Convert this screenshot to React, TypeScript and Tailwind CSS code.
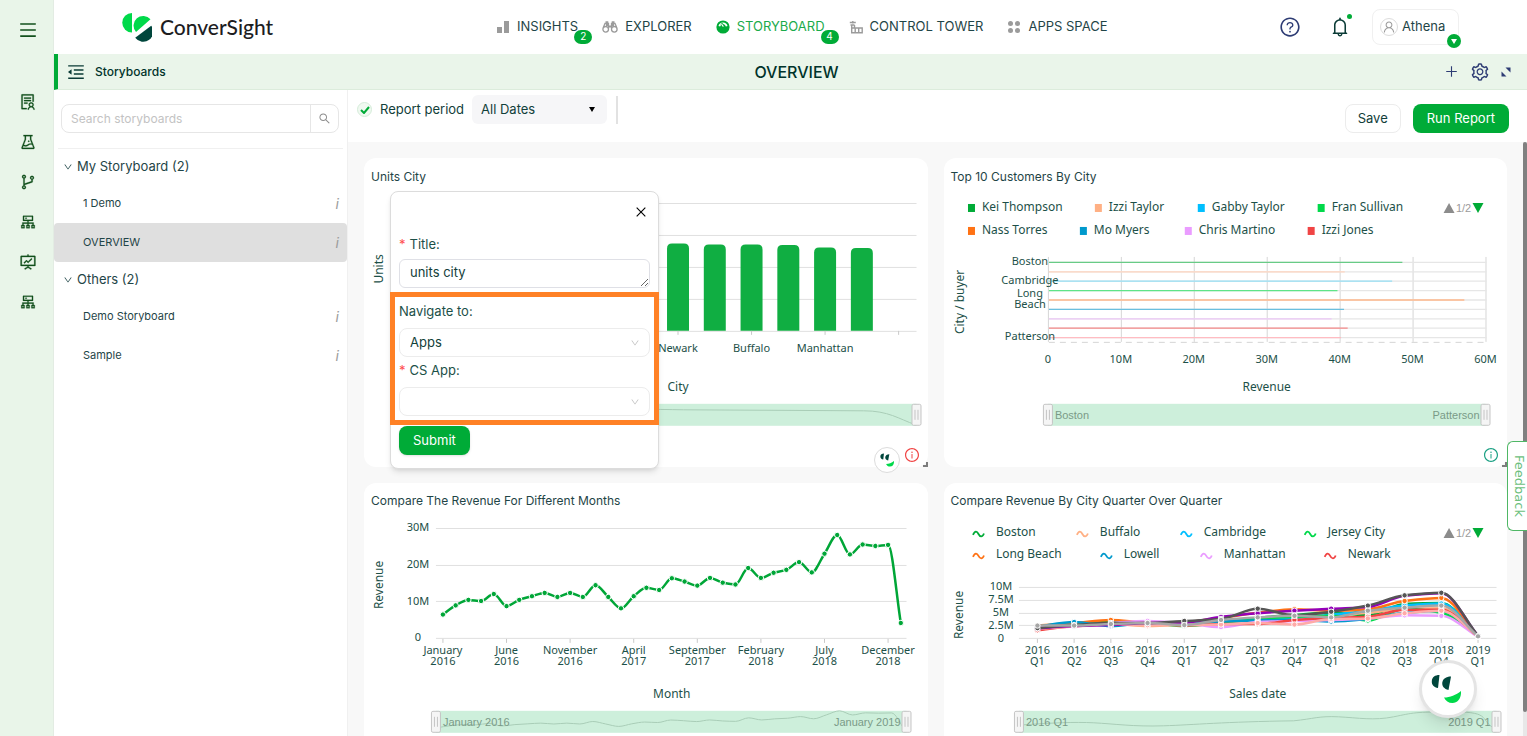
import { useState } from 'react';
import type { ReactNode } from 'react';
import {
  AiOutlineBell,
  AiOutlineBranches,
  AiOutlineClose,
  AiOutlineCluster,
  AiOutlineDown,
  AiOutlineExperiment,
  AiOutlineFundProjectionScreen,
  AiOutlineInfoCircle,
  AiOutlineMenu,
  AiOutlineMenuFold,
  AiOutlinePlus,
  AiOutlineQuestionCircle,
  AiOutlineSearch,
  AiOutlineSetting,
  AiOutlineSolution,
  AiOutlineUser,
} from 'react-icons/ai';

type Point = [number, number];

const chartFont = 'font-["Noto_Sans",sans-serif]';

// Monotone cubic through the points, so the curve never overshoots a peak
function smoothPath(pts: Point[]) {
  const n = pts.length;
  const slopes = pts.slice(1).map((p, i) => (p[1] - pts[i][1]) / (p[0] - pts[i][0]));
  const tangents = pts.map((_, i) => {
    if (i === 0) return slopes[0];
    if (i === n - 1) return slopes[n - 2];
    const a = slopes[i - 1];
    const b = slopes[i];
    return a * b <= 0 ? 0 : (2 * a * b) / (a + b);
  });
  let d = `M${pts[0][0]},${pts[0][1]}`;
  for (let i = 1; i < n; i++) {
    const [x0, y0] = pts[i - 1];
    const [x1, y1] = pts[i];
    const h = (x1 - x0) / 3;
    d += `C${x0 + h},${y0 + tangents[i - 1] * h} ${x1 - h},${y1 - tangents[i] * h} ${x1},${y1}`;
  }
  return d;
}

/* ---------- header ---------- */

function Logo() {
  return (
    <a href="#" className="flex items-center gap-2 text-[#1d1d1f]">
      <svg viewBox="0 0 30 29" className="h-[29px] w-[30px]">
        <path d="M10 0v19.500A9.750 9.750 0 0 1 10 0z" fill="#00d94a" />
        <path d="M14 19A9.400 9.400 0 0 1 28.500 6.200z" fill="#00d94a" />
        <path d="M13.200 24.800L29.200 12.800A10 10 0 0 1 13.200 24.800z" fill="#00463c" />
      </svg>
      <span className='font-["Lato",sans-serif] text-[21px] leading-7 font-medium'>ConverSight</span>
    </a>
  );
}

function BarsIcon() {
  return (
    <svg viewBox="0 0 14 14" className="h-[14px] w-[14px]" fill="#9b9b9b">
      <rect x="1" y="7" width="5" height="6" />
      <rect x="8" y="1" width="5" height="12" />
    </svg>
  );
}

function BinocularsIcon() {
  return (
    <svg viewBox="0 0 16 12" className="h-3 w-4" fill="none" stroke="#9b9b9b" strokeWidth="1.3">
      <circle cx="3.700" cy="8.300" r="2.800" />
      <circle cx="12.300" cy="8.300" r="2.800" />
      <path d="M1.500 6L3 2.500h3.500v5M14.500 6L13 2.500H9.500v5" />
      <path d="M3.500 1.200h2.800M9.700 1.200h2.800M6.500 5.500h3M4 4h2M10 4h2" strokeWidth="1.800" />
    </svg>
  );
}

function GaugeIcon() {
  return (
    <svg viewBox="0 0 14 14" className="h-[14px] w-[14px]">
      <circle cx="7" cy="7" r="6.600" fill="#00ab37" />
      <path d="M3.300 6.300a3.800 3.800 0 0 1 7.400 0" fill="none" stroke="#fff" strokeWidth="1.700" />
      <path d="M5.300 3.500L8 6.500" stroke="#00ab37" strokeWidth="2.200" />
      <path d="M5.500 4.200L7.400 6.600" stroke="#fff" strokeWidth="1.100" />
    </svg>
  );
}

function TowerIcon() {
  return (
    <svg viewBox="0 0 14 14" className="h-[14px] w-[14px]" fill="none" stroke="#9b9b9b" strokeWidth="1.400">
      <path d="M.8 2.500h6M3.800 1v2.500M1.500 5h4M2.700 5v7.700h10.500V8H5.500V5M2.700 8h3M6.200 8v4.500M9.700 8v4.500" />
    </svg>
  );
}

function AppsIcon() {
  return (
    <svg viewBox="0 0 14 14" className="h-[14px] w-[14px]" fill="#9b9b9b">
      <circle cx="3.500" cy="3.500" r="2.500" />
      <circle cx="10.500" cy="3.500" r="2.500" />
      <circle cx="3.500" cy="10.500" r="2.500" />
      <circle cx="10.500" cy="10.500" r="2.500" />
    </svg>
  );
}

const navItems = [
  { label: 'INSIGHTS', icon: <BarsIcon />, badge: 2 },
  { label: 'EXPLORER', icon: <BinocularsIcon /> },
  { label: 'STORYBOARD', icon: <GaugeIcon />, badge: 4, active: true },
  { label: 'CONTROL TOWER', icon: <TowerIcon /> },
  { label: 'APPS SPACE', icon: <AppsIcon /> },
];

function Header() {
  return (
    <header className="flex h-[54px] shrink-0 items-center bg-white pr-[68px] pl-[68px]">
      <div className="w-[374px] shrink-0">
        <Logo />
      </div>
      <nav className="flex items-center gap-6 pb-px">
        {navItems.map((item) => (
          <a
            key={item.label}
            href="#"
            className={`relative flex items-center gap-[7px] text-[13px] whitespace-nowrap ${item.active ? 'text-[#1aab4b]' : 'text-[#1f4547]'}`}
          >
            {item.icon}
            {item.label}
            {item.badge && (
              <span className="absolute top-[13px] -right-[14px] flex h-[14px] w-[18px] items-center justify-center rounded-full bg-[#00ab37] text-[10px] text-white">
                {item.badge}
              </span>
            )}
          </a>
        ))}
      </nav>
      <div className="ml-auto flex items-center">
        <button aria-label="Help" className="mr-7">
          <AiOutlineQuestionCircle className="h-[22px] w-[22px] text-[#2e3c74]" />
        </button>
        <button aria-label="Notifications" className="relative mr-[21px]">
          <AiOutlineBell className="h-[22px] w-[22px] text-[#0b3b36]" />
          <span className="absolute -top-[2px] -right-px h-[5px] w-[5px] rounded-full bg-[#00ab37]" />
        </button>
        <button className="relative flex h-9 w-[87px] items-center gap-1 rounded-lg border border-[#f0f0f0] px-[7px] text-[13px] text-[#1f4547]">
          <span className="flex h-[18px] w-[18px] shrink-0 items-center justify-center rounded-full border border-[#dcdcdc]">
            <AiOutlineUser className="h-[14px] w-[14px] text-[#9b9b9b]" />
          </span>
          Athena
          <span className="absolute -right-[3px] -bottom-1 flex h-[14px] w-[14px] items-center justify-center rounded-full bg-[#00ab37]">
            <svg viewBox="0 0 6 5" className="h-[5px] w-[6px]" fill="#fff">
              <path d="M0 0h6L3 5z" />
            </svg>
          </span>
        </button>
      </div>
    </header>
  );
}

function TitleBar() {
  return (
    <div className="grid h-9 shrink-0 grid-cols-[1fr_auto_1fr] items-center border-b border-l-4 border-b-[#dcecdc] border-l-[#00ab37] bg-[#eaf5ea] pr-4 pl-2">
      <div className="flex items-center gap-[9px]">
        <button aria-label="Collapse storyboards">
          <AiOutlineMenuFold className="h-5 w-5 text-[#0b3b36]" />
        </button>
        <h2 className="text-xs font-medium text-[#00332b]">Storyboards</h2>
      </div>
      <h1 className="pl-4 text-base font-medium text-[#00332b]">OVERVIEW</h1>
      <div className="flex items-center justify-end gap-[11px] text-[#2e3c74]">
        <button aria-label="Add">
          <AiOutlinePlus className="h-[15px] w-[15px]" />
        </button>
        <button aria-label="Settings">
          <AiOutlineSetting className="h-5 w-5" />
        </button>
        <button aria-label="Expand">
          <svg viewBox="0 0 10 10" className="h-[10px] w-[10px]" fill="#2e3c74">
            <path d="M4.500.5h5v5zM.5 4.500v5h5z" />
          </svg>
        </button>
      </div>
    </div>
  );
}

/* ---------- side ---------- */

const railIcons = [
  { label: 'Reports', Icon: AiOutlineSolution },
  { label: 'Experiments', Icon: AiOutlineExperiment },
  { label: 'Branches', Icon: AiOutlineBranches },
  { label: 'Clusters', Icon: AiOutlineCluster },
  { label: 'Projections', Icon: AiOutlineFundProjectionScreen },
  { label: 'Datasets', Icon: AiOutlineCluster },
];

function Rail() {
  return (
    <aside className="flex w-[54px] shrink-0 flex-col items-center border-r border-[#e3ece3] bg-[#e9f5e9] pt-5 pl-[2px] text-[#12501c]">
      <button aria-label="Menu">
        <AiOutlineMenu className="h-5 w-5" />
      </button>
      <nav className="mt-[53px] flex flex-col gap-[22px]">
        {railIcons.map(({ label, Icon }) => (
          <a key={label} href="#" aria-label={label}>
            <Icon className="h-[18px] w-[18px] stroke-[#12501c] stroke-[14]" />
          </a>
        ))}
      </nav>
    </aside>
  );
}

const groups = [
  { name: 'My Storyboard (2)', items: ['1 Demo', 'OVERVIEW'] },
  { name: 'Others (2)', items: ['Demo Storyboard', 'Sample'] },
];

function Sidebar() {
  const [selected, setSelected] = useState('OVERVIEW');
  return (
    <section className="w-[294px] shrink-0 border-r border-[#f0f0f0] bg-white">
      <div className="mx-1 border-b border-[#f0f0f0] pt-[14px] pr-1 pb-[15px] pl-[3px]">
        <form className="flex h-[29px] overflow-hidden rounded-lg border border-[#e6e6e6]">
          <input
            type="text"
            aria-label="Search storyboards"
            placeholder="Search storyboards"
            className="min-w-0 flex-1 px-[9px] text-xs outline-none placeholder:text-[#c3c3c3]"
          />
          <button type="button" aria-label="Search" className="flex w-7 items-center justify-center border-l border-[#e6e6e6]">
            <AiOutlineSearch className="h-[13px] w-[13px] text-[#8c8c8c]" />
          </button>
        </form>
      </div>
      {groups.map((group) => (
        <div key={group.name}>
          <button className="flex h-[35px] w-full items-center gap-1 pl-[9px] text-[13px] text-[#1f4547]">
            <AiOutlineDown className="h-[10px] w-[10px]" />
            {group.name}
          </button>
          {group.items.map((item) => (
            <button
              key={item}
              onClick={() => setSelected(item)}
              className={`flex h-[39px] w-full items-center justify-between rounded-sm pr-2 pl-[29px] text-[11px] text-[#1f4547] ${selected === item ? 'bg-[#dfdfdf]' : ''}`}
            >
              {item}
              <span className="text-sm text-[#9b9b9b] italic">i</span>
            </button>
          ))}
        </div>
      ))}
    </section>
  );
}

function Toolbar() {
  return (
    <div className="flex h-[52px] shrink-0 items-start justify-between bg-white pt-[5px] pr-[18px] pl-[9px]">
      <div className="flex items-center">
        <span className="flex h-[15px] w-[15px] items-center justify-center rounded-full border border-[#d5ecd9] bg-[#f0f9f1]">
          <svg viewBox="0 0 10 8" className="h-2 w-[10px]" fill="none" stroke="#00ab37" strokeWidth="2">
            <path d="M1 4l3 3 5-6" />
          </svg>
        </span>
        <label htmlFor="period" className="ml-2 text-[13px] text-[#12403a]">
          Report period
        </label>
        <div className="relative ml-2">
          <select
            id="period"
            className="h-[29px] w-[135px] appearance-none rounded-md bg-[#f6f6f8] pl-[9px] text-[13px] text-[#12403a]"
          >
            <option>All Dates</option>
          </select>
          <svg viewBox="0 0 6 5" className="pointer-events-none absolute top-3 right-3 h-[5px] w-[6px]">
            <path d="M0 0h6L3 5z" />
          </svg>
        </div>
        <span className="ml-[9px] h-7 w-[2px] bg-[#e2e2e2]" />
      </div>
      <div className="mt-[9px] flex gap-3 text-[13px]">
        <button className="h-[29px] rounded-lg border border-[#ececec] px-3 text-[#12403a]">Save</button>
        <button className="h-[29px] rounded-lg bg-[#00ab37] px-[14px] text-white">Run Report</button>
      </div>
    </div>
  );
}

/* ---------- charts ---------- */

function Label({ x, y, children, size = 11, anchor = 'middle' }: {
  x: number; y: number; children: ReactNode; size?: number; anchor?: 'start' | 'middle' | 'end';
}) {
  return (
    <text x={x} y={y - 1} fontSize={size} textAnchor={anchor} dominantBaseline="central" fill="#1c5048">
      {children}
    </text>
  );
}

function AxisName({ x, y, children }: { x: number; y: number; children: ReactNode }) {
  return (
    <text transform={`translate(${x - 1} ${y}) rotate(-90)`} fontSize={12} textAnchor="middle" dominantBaseline="central" fill="#1c5048">
      {children}
    </text>
  );
}

function ZoomBar({ x1, x2, y, shadow, from, to }: {
  x1: number; x2: number; y: number; shadow?: string; from?: string; to?: string;
}) {
  return (
    <g>
      <rect x={x1} y={y} width={x2 - x1} height={22} fill="#cdefdb" />
      {shadow && <path d={shadow} fill="none" stroke="#a9cdb7" />}
      {[x1, x2].map((x) => (
        <g key={x} stroke="#c4c4c4">
          <rect x={x - 4.5} y={y + 0.5} width={9} height={21} rx={1.5} fill="#f5f5f5" />
          <path d={`M${x - 1.5} ${y + 6}v10M${x + 1.5} ${y + 6}v10`} />
        </g>
      ))}
      <g fontSize={11} fill="#7a9a87" className='font-["Liberation_Sans",Arial,sans-serif]' dominantBaseline="central">
        <text x={x1 + 7} y={y + 11}>{from}</text>
        <text x={x2 - 6} y={y + 11} textAnchor="end">{to}</text>
      </g>
    </g>
  );
}

function Pager({ y }: { y: number }) {
  return (
    <g>
      <path d={`M500 ${y + 5}h11l-5.500-10z`} fill="#8c8c8c" />
      <text x={520} y={y} fontSize={11} textAnchor="middle" dominantBaseline="central" fill="#9b9b9b" className='font-["Liberation_Sans",Arial,sans-serif]'>
        1/2
      </text>
      <path d={`M529 ${y - 5}h11l-5.500 10z`} fill="#00ab37" />
    </g>
  );
}

function ChartSvg({ label, children }: { label: string; children: ReactNode }) {
  return (
    <svg viewBox="0 0 564 277" role="img" aria-label={label} className={`block h-auto w-full ${chartFont}`}>
      {children}
    </svg>
  );
}

const unitBars = [97, 94, 92, 91, 89, 88, 87.5, 86.5, 86.5, 86, 83.5, 83, 0];

function UnitsChart() {
  const cx = (i: number) => 93.5 + i * 36.8;
  return (
    <ChartSvg label="Units by city">
      {[13, 45, 77, 109, 141].map((y) => (
        <path key={y} d={`M75 ${y + 0.5}H553`} stroke="#e0e0e0" />
      ))}
      {unitBars.map((h, i) =>
        h > 0 ? (
          <path
            key={i}
            d={`M${cx(i) - 11} 141v${-h + 5}q0 -5 5 -5h12q5 0 5 5v${h - 5}z`}
            fill="#10ae42"
          />
        ) : null,
      )}
      {[0, 2, 4, 6, 8, 10, 12].map((i) => (
        <path key={i} d={`M${cx(i)} 141v4`} stroke="#c9c9c9" />
      ))}
      <Label x={cx(6)} y={159}>Newark</Label>
      <Label x={cx(8)} y={159}>Buffalo</Label>
      <Label x={cx(10)} y={159}>Manhattan</Label>
      <Label x={cx(6)} y={198} size={12}>City</Label>
      <AxisName x={16} y={79}>Units</AxisName>
      <ZoomBar x1={75} x2={553} y={214} shadow="M75 216C180 218 260 219 320 220L500 221C525 221 535 229 552 235" />
    </ChartSvg>
  );
}

const customerLegend = [
  { name: 'Kei Thompson', x: 24, y: 18, color: '#00ab37' },
  { name: 'Izzi Taylor', x: 151, y: 18, color: '#ffb084' },
  { name: 'Gabby Taylor', x: 254, y: 18, color: '#00bfff' },
  { name: 'Fran Sullivan', x: 374, y: 18, color: '#00d94a' },
  { name: 'Nass Torres', x: 24, y: 41, color: '#ff7214' },
  { name: 'Mo Myers', x: 136, y: 41, color: '#0099cc' },
  { name: 'Chris Martino', x: 241, y: 41, color: '#ea9cff' },
  { name: 'Izzi Jones', x: 364, y: 41, color: '#f04444' },
];

const customerBars = [
  { value: 48.6, color: '#68cb86' },
  { value: 40.7, color: '#ffd6c0' },
  { value: 47.2, color: '#96dff5' },
  { value: 39.7, color: '#5fe488' },
  { value: 57.1, color: '#ffb98c' },
  { value: 40.6, color: '#6abfdf' },
  { value: 38.9, color: '#edc8f7' },
  { value: 41.1, color: '#f58a8a' },
  { value: 40.2, color: '#ffbcc2' },
];

function CustomersChart() {
  return (
    <ChartSvg label="Top customers by city">
      {customerLegend.map((l) => (
        <g key={l.name}>
          <rect x={l.x} y={l.y - 4} width={7} height={8} fill={l.color} />
          <Label x={l.x + 14} y={l.y} size={12} anchor="start">{l.name}</Label>
        </g>
      ))}
      <Pager y={18} />
      {[0, 10, 20, 30, 40, 50, 60].map((v, i) => (
        <g key={v}>
          <path d={`M${104.5 + i * 73} 67v85`} stroke="#d6d6d6" />
          <Label x={104 + i * 73} y={170}>{v === 0 ? '0' : `${v}M`}</Label>
        </g>
      ))}
      {customerBars.map((b, i) => {
        const y = 72.5 + i * 9.4;
        return (
          <g key={i} strokeWidth={1.3}>
            <path d={`M105 ${y}H543`} stroke="#e6e6e6" />
            <path d={`M105 ${y}H${104 + b.value * 7.3}`} stroke={b.color} />
          </g>
        );
      })}
      <path d="M105 152.500H543" stroke="#d6d6d6" strokeDasharray="6 5" />
      <Label x={86} y={72}>Boston</Label>
      <Label x={86} y={91}>Cambridge</Label>
      <Label x={86} y={104}>Long</Label>
      <Label x={86} y={115}>Beach</Label>
      <Label x={86} y={147}>Patterson</Label>
      <AxisName x={17} y={112}>City / buyer</AxisName>
      <Label x={323} y={198} size={12}>Revenue</Label>
      <ZoomBar x1={104} x2={542} y={214} from="Boston" to="Patterson" />
    </ChartSvg>
  );
}

const monthly = [
  6.5, 9, 10.5, 10.2, 12.1, 8.8, 10.5, 11.5, 12.4, 11.3, 12.4, 11.3, 14.5, 11.3, 8.2, 11.5, 13.8, 13.2, 16.4,
  15.5, 14.4, 16.5, 15.2, 14.7, 19.2, 16.5, 17.9, 18.7, 20.8, 18, 23.1, 28.2, 22.9, 25.6, 25.2, 25.5, 4.2,
];

const monthTicks = [
  ['January', '2016'],
  ['June', '2016'],
  ['November', '2016'],
  ['April', '2017'],
  ['September', '2017'],
  ['February', '2018'],
  ['July', '2018'],
  ['December', '2018'],
];

function MonthsChart() {
  const pts = monthly.map((v, i): Point => [79 + i * 12.73, 123.5 - v * 3.67]);
  const shadow = smoothPath(monthly.map((v, i): Point => [73 + i * 13, 218 - v * 0.78]));
  return (
    <ChartSvg label="Revenue by month">
      {[30, 20, 10, 0].map((v, i) => (
        <g key={v}>
          <path d={`M72 ${Math.round(13 + i * 36.7) + 0.5}H543`} stroke="#e0e0e0" />
          <Label x={54} y={13 + i * 36.7}>{v === 0 ? '0' : `${v}M`}</Label>
        </g>
      ))}
      {monthTicks.map(([month, year], i) => (
        <g key={i}>
          <path d={`M${79 + i * 63.65} 124v4`} stroke="#c9c9c9" />
          <Label x={79 + i * 63.65} y={136}>{month}</Label>
          <Label x={79 + i * 63.65} y={147}>{year}</Label>
        </g>
      ))}
      <path d={smoothPath(pts)} fill="none" stroke="#00a637" strokeWidth={2.5} />
      {pts.map(([x, y]) => (
        <circle key={x} cx={x} cy={y} r={2.7} fill="#00a637" stroke="#fff" />
      ))}
      <Label x={308} y={180} size={12}>Month</Label>
      <AxisName x={16} y={70}>Revenue</AxisName>
      <ZoomBar x1={72} x2={543} y={196} shadow={shadow} from="January 2016" to="January 2019" />
    </ChartSvg>
  );
}

const cityLegend = [
  { name: 'Boston', x: 28, y: 18, color: '#00ab37' },
  { name: 'Buffalo', x: 132, y: 18, color: '#ffb084' },
  { name: 'Cambridge', x: 236, y: 18, color: '#00bfff' },
  { name: 'Jersey City', x: 360, y: 18, color: '#00d94a' },
  { name: 'Long Beach', x: 28, y: 40, color: '#ff7214' },
  { name: 'Lowell', x: 156, y: 40, color: '#0099cc' },
  { name: 'Manhattan', x: 256, y: 40, color: '#ea9cff' },
  { name: 'Newark', x: 380, y: 40, color: '#f04444' },
];

const citySeries = [
  { color: '#00ab37', data: [2.4, 2.8, 3.2, 3, 3, 3.4, 4, 4.6, 5, 4.5, 6.7, 6.9, 0.4] },
  { color: '#ffb084', data: [2.1, 2.4, 2.8, 2.4, 2.7, 3.2, 3.8, 4.1, 4.5, 5, 5.8, 5.9, 0.4] },
  { color: '#00bfff', data: [2.3, 2.8, 2.9, 3, 3, 3.5, 3.8, 4, 4.6, 5.4, 6.4, 6.8, 0.4] },
  { color: '#00d94a', data: [2.2, 2.6, 2.8, 3, 2.4, 3, 3.8, 4.2, 4.4, 3.5, 5.8, 5, 0.4] },
  { color: '#ff7214', data: [2.5, 3, 3.6, 3.1, 3.2, 4, 5, 5.7, 5.4, 5.7, 7.3, 7.9, 0.5] },
  { color: '#0099cc', data: [2.3, 3.2, 2.4, 3, 2.8, 3.3, 3.5, 3.6, 3.3, 3.8, 5, 5.4, 0.4] },
  { color: '#ea9cff', data: [2.2, 2.4, 3, 3.4, 3, 2.2, 3.2, 3.4, 3.6, 3.9, 4.5, 4.4, 0.3] },
  { color: '#f04444', data: [1.6, 2.4, 2.8, 3, 2.5, 2.8, 2.8, 3.6, 4, 4.2, 5.6, 5.6, 0.4] },
  { color: '#ffaaa8', data: [1.9, 2.3, 2.7, 2.6, 2.6, 2.7, 3, 2.7, 3.8, 3.9, 4.9, 5.4, 0.4] },
  { color: '#9400b8', data: [2, 2.4, 2.6, 3, 3.1, 4.2, 4.9, 5.4, 5.8, 6.1, 8.3, 8.8, 0.5] },
  { color: '#555555', data: [2, 2.6, 3, 3, 3.4, 3.8, 5.8, 4.5, 5.2, 6.4, 8.4, 8.9, 0.5] },
  { color: '#a6a6a6', data: [2.5, 2.5, 2.8, 3, 2.6, 3.6, 4.1, 4.4, 4.1, 5.4, 6, 6.4, 0.4] },
];

const quarters = ['2016 Q1', '2016 Q2', '2016 Q3', '2016 Q4', '2017 Q1', '2017 Q2', '2017 Q3', '2017 Q4', '2018 Q1', '2018 Q2', '2018 Q3', '2018 Q4', '2019 Q1'];

function QuartersChart() {
  const qx = (i: number) => 93.5 + i * 36.75;
  return (
    <ChartSvg label="Revenue by city and quarter">
      {cityLegend.map((l) => (
        <g key={l.name}>
          <path d={`M${l.x + 1} ${l.y + 2}c2 -4.500 4 -4 5.500 -1s4 3.500 5.500 -0.500`} fill="none" stroke={l.color} strokeWidth={1.8} />
          <Label x={l.x + 24} y={l.y} size={12} anchor="start">{l.name}</Label>
        </g>
      ))}
      <Pager y={18} />
      {['10M', '7.5M', '5M', '2.5M', '0'].map((v, i) => (
        <g key={v}>
          <path d={`M75 ${Math.round(72 + i * 12.8) + 0.5}H553`} stroke="#e0e0e0" />
          <Label x={57} y={72 + i * 12.8}>{v}</Label>
        </g>
      ))}
      {quarters.map((q, i) => (
        <g key={q}>
          <path d={`M${qx(i)} 124v4`} stroke="#c9c9c9" />
          <Label x={qx(i)} y={136}>{q.slice(0, 4)}</Label>
          <Label x={qx(i)} y={147}>{q.slice(5)}</Label>
        </g>
      ))}
      {citySeries.map((s) => {
        const pts = s.data.map((v, i): Point => [qx(i), 123.5 - v * 5.13]);
        return (
          <g key={s.color}>
            <path d={smoothPath(pts)} fill="none" stroke={s.color} strokeWidth={2.5} />
            {pts.map(([x, y]) => (
              <circle key={x} cx={x} cy={y} r={2.7} fill={s.color} stroke="#fff" />
            ))}
          </g>
        );
      })}
      <Label x={314} y={180} size={12}>Sales date</Label>
      <AxisName x={16} y={100}>Revenue</AxisName>
      <ZoomBar
        x1={75}
        x2={553}
        y={196}
        from="2016 Q1"
        to="2019 Q1"
        shadow="M80 210C110 208 130 207 150 208S190 212 220 211S280 207 350 206C370 204 375 201 395 202S430 206 450 202S470 197 510 197S535 206 552 214"
      />
    </ChartSvg>
  );
}

/* ---------- cards ---------- */

function SmileIcon({ className }: { className: string }) {
  return (
    <svg viewBox="0 0 30 30" className={className}>
      <path d="M8.500 1L7 14C3 13.500 0.500 11 0.800 7S4 1 8.500 1z" fill="#00463c" />
      <path d="M20 2.500L17.500 16C13 15 10.800 12 11.300 8.500S15 2.500 20 2.500z" fill="#00463c" />
      <path d="M13 23.500C19 23.500 25 21 30 17C30.500 24 27 29 21.500 29C17.500 29 14.500 27 13 23.500z" fill="#00d94a" />
    </svg>
  );
}

function Card({ title, children }: { title: string; children: ReactNode }) {
  return (
    <article className="relative rounded-xl bg-white">
      <h3 className="flex h-8 items-center px-[7px] pt-[5px] text-xs text-[#1f4547]">{title}</h3>
      {children}
    </article>
  );
}

function ResizeCorner() {
  return <span className="absolute right-0 bottom-0 h-[5px] w-[5px] border-r-2 border-b-2 border-[#7d7d7d]" />;
}

function SettingsPopup({ onClose }: { onClose: () => void }) {
  return (
    <form className="absolute top-[33px] left-[26px] w-[269px] rounded-lg border border-[#dcdcdc] bg-white px-2 pb-[13px] text-[13px] text-[#1c5048] shadow-md">
      <div className="flex h-[39px] items-center justify-end pr-[2px]">
        <button type="button" aria-label="Close" onClick={onClose}>
          <AiOutlineClose className="h-[14px] w-[14px] text-black" />
        </button>
      </div>
      <label htmlFor="title" className="mt-[3px] flex h-[22px] items-center gap-1">
        <span className="text-[#ff4d4f]">*</span> Title:
      </label>
      <textarea
        id="title"
        rows={1}
        defaultValue="units city"
        className="mt-[3px] block h-[29px] w-[251px] resize-y overflow-hidden rounded-md border border-[#dfe0e6] px-[10px] py-1 leading-4 text-[#12403a] outline-none"
      />
      {/* highlighted group */}
      <div className="-mx-[9px] mt-1 h-[133px] border-5 border-[#ff8126] px-1 pt-1">
        <label htmlFor="navigate" className="flex h-[22px] items-center">
          Navigate to:
        </label>
        <div className="relative mt-[5px]">
          <select
            id="navigate"
            className="block h-[29px] w-full appearance-none rounded-lg border border-[#ececec] pl-[10px] text-[#12403a]"
          >
            <option>Apps</option>
          </select>
          <AiOutlineDown className="pointer-events-none absolute top-[10px] right-[10px] h-[10px] w-[10px] text-[#bfbfbf]" />
        </div>
        <label htmlFor="csapp" className="mt-[3px] flex h-[22px] items-center gap-1">
          <span className="text-[#ff4d4f]">*</span> CS App:
        </label>
        <div className="relative mt-[5px]">
          <select id="csapp" className="block h-[29px] w-full appearance-none rounded-lg border border-[#ececec] pl-[10px]">
            <option></option>
          </select>
          <AiOutlineDown className="pointer-events-none absolute top-[10px] right-[10px] h-[10px] w-[10px] text-[#bfbfbf]" />
        </div>
      </div>
      <button type="button" className="mt-px h-[29px] rounded-lg bg-[#00ab37] px-[14px] text-white shadow-sm">
        Submit
      </button>
    </form>
  );
}

export default function App() {
  const [popupOpen, setPopupOpen] = useState(true);

  return (
    <div className='relative flex h-screen overflow-hidden bg-white font-["Inter",sans-serif]'>
      <Rail />
      <div className="flex min-w-0 flex-1 flex-col">
        <Header />
        <TitleBar />
        <div className="flex min-h-0 flex-1">
          <Sidebar />
          <main className="flex min-w-0 flex-1 flex-col">
            <Toolbar />
            <div className="flex min-h-0 flex-1 bg-[#f8f8f8]">
              <div className="grid min-w-0 flex-1 grid-cols-2 content-start gap-4 overflow-hidden p-4">
                <Card title="Units City">
                  <UnitsChart />
                  <span className="absolute right-7 -bottom-[6px] flex h-[26px] w-[26px] items-center justify-center rounded-full border border-[#dcdcdc] bg-white">
                    <SmileIcon className="h-[14px] w-[14px]" />
                  </span>
                  <AiOutlineInfoCircle className="absolute right-2 bottom-1 h-4 w-4 text-[#f04444]" />
                  <ResizeCorner />
                  {popupOpen && <SettingsPopup onClose={() => setPopupOpen(false)} />}
                </Card>
                <Card title="Top 10 Customers By City">
                  <CustomersChart />
                  <AiOutlineInfoCircle className="absolute right-2 bottom-1 h-4 w-4 text-[#1aa083]" />
                  <ResizeCorner />
                </Card>
                <Card title="Compare The Revenue For Different Months">
                  <MonthsChart />
                </Card>
                <Card title="Compare Revenue By City Quarter Over Quarter">
                  <QuartersChart />
                </Card>
              </div>
              <div className="w-1 bg-[#e8e8e8]">
                <div className="h-[96%] rounded-full bg-[#808080]" />
              </div>
            </div>
          </main>
        </div>
      </div>

      <button className="absolute top-[441px] right-0 flex h-[90px] w-5 items-center justify-center rounded-l-md border border-r-0 border-[#4fb765] bg-white pl-1 text-[13px] text-[#6cc07c]">
        <span className='font-["DejaVu_Sans",sans-serif] [writing-mode:vertical-rl]'>Feedback</span>
      </button>
      <button
        aria-label="Open assistant"
        className="absolute right-[50px] bottom-[18px] flex h-[58px] w-[58px] items-center justify-center rounded-full border-3 border-[#e4e4e4] bg-white pr-1 shadow-lg"
      >
        <SmileIcon className="h-[30px] w-[30px]" />
      </button>
    </div>
  );
}
